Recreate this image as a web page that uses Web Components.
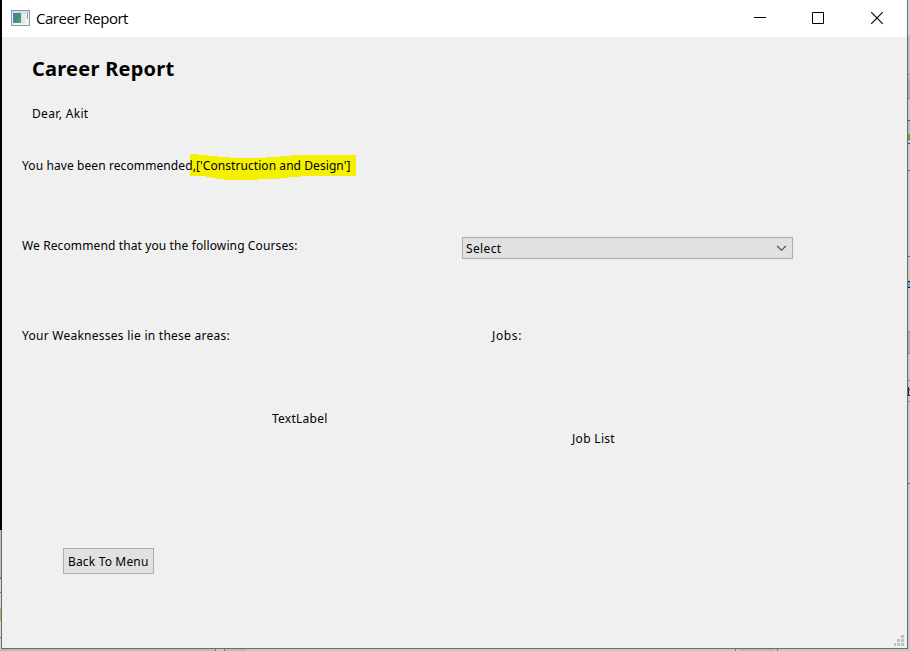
<!DOCTYPE html>
<html lang="en">
<head>
<meta charset="utf-8">
<title>Career Report</title>
<style>
html,body{margin:0;height:100%;overflow:hidden}
body{font:12px/16px "Noto Sans","Open Sans",sans-serif;color:#000}
</style>
</head>
<body>
<desktop-backdrop>
<app-window>
  <title-bar slot="bar"><fit-text width="92" style="font:15px/20px 'Open Sans','Noto Sans',sans-serif">Career Report</fit-text></title-bar>
  <form-row style="--h:63px;--x:30px;--y:20px"><fit-text width="142.5" style="font:bold 20px/24px 'Noto Sans',sans-serif">Career Report</fit-text></form-row>
  <form-row style="--h:54px;--x:30px;--y:6px"><fit-text width="56.5">Dear, Akit</fit-text></form-row>
  <form-row style="--h:76px;--x:20px;--y:4px"><fit-text width="174">You have been recommended,</fit-text><marker-text><fit-text width="154.5">['Construction and Design']</fit-text></marker-text></form-row>
  <form-row style="--h:90px;--x:20px;--y:8px"><fit-text width="275.5">We Recommend that you the following Courses:</fit-text><combo-box style="margin-left:164.5px"><fit-text width="35.5">Select</fit-text></combo-box></form-row>
  <form-row style="--h:84px;--x:20px;--y:8px"><fit-text width="208">Your Weaknesses lie in these areas:</fit-text><fit-text width="30" style="margin-left:262px">Jobs:</fit-text></form-row>
  <form-row style="--h:20px;--x:270px;--y:7px"><fit-text width="55.5">TextLabel</fit-text></form-row>
  <form-row style="--h:124px;--x:570px;--y:7px"><fit-text width="43">Job List</fit-text></form-row>
  <form-row style="--h:60px;--x:61px;--y:0px"><push-button><fit-text width="80.5">Back To Menu</fit-text></push-button></form-row>
  <size-grip slot="grip"></size-grip>
</app-window>
</desktop-backdrop>
<script>
function define(name, markup, connected) {
  customElements.define(name, class extends HTMLElement {
    constructor() { super(); this.attachShadow({mode: 'open'}).innerHTML = markup; }
    connectedCallback() { if (connected) connected(this); }
  });
}

// A one-line label whose tracking is adjusted to its stated width.
define('fit-text', `<style>
:host{display:block;flex:none;white-space:nowrap;position:relative;z-index:1}
span{display:inline-block}
</style><span><slot></slot></span>`, el => {
  const span = el.shadowRoot.querySelector('span');
  const target = +el.getAttribute('width');
  const n = el.textContent.length;
  span.style.letterSpacing = (target - span.getBoundingClientRect().width) / n + 'px';
  el.style.width = target + 'px';
});

define('form-row', `<style>
:host{display:flex;box-sizing:border-box;flex:none;align-items:flex-start;height:var(--h);padding:var(--y) 0 0 var(--x)}
</style><slot></slot>`);

define('marker-text', `<style>
:host{display:block;position:relative}
svg{position:absolute;left:-6px;top:-4px;width:168px;height:28px}
</style>
<svg viewBox="0 0 168 28" shape-rendering="crispEdges"><path fill="#f4f000" d="M0 0h8v1h11v1h9v1h12v1h36v-1h14v-1h12v-1h64v21h-55v1h-13v1h-9v1H68v1H35v-1h-8v-1H21v-1h-5v-1H0z"/></svg>
<slot></slot>`);

define('combo-box', `<style>
:host{display:flex;box-sizing:border-box;width:331px;height:22px;margin-top:-1px;border:1px solid #adadad;background:#e1e1e1;padding:3px 5px 0 3px;justify-content:space-between}
svg{width:11px;height:7px;margin-top:4px}
</style><slot></slot><svg viewBox="0 0 11 7"><path d="M1.2 1 5.5 5.3 9.8 1" fill="none" stroke="#444" stroke-width="1.1"/></svg>`);

define('push-button', `<style>
:host{display:flex;box-sizing:border-box;width:91px;height:26px;border:1px solid #adadad;background:#e1e1e1;padding:5px 0 0 4px}
</style><slot></slot>`);

define('title-bar', `<style>
:host{display:flex;align-items:flex-start;height:37px;background:#fff}
.app{width:19px;height:16px;margin:10px 6px 0 9px}
slot{display:block;padding-top:8px}
.buttons{margin:9px 21px 0 auto;display:flex;gap:40px}
.buttons svg{width:18px;height:18px}
.buttons svg:last-child{margin-left:1px}
</style>
<svg class="app" viewBox="0 0 19 16" shape-rendering="crispEdges">
<defs><linearGradient id="g" x2="1" y2="1"><stop stop-color="#477db0"/><stop offset=".55" stop-color="#438e82"/><stop offset="1" stop-color="#5daa6a"/></linearGradient><linearGradient id="s" x2="0" y2="1"><stop stop-color="#5a99b2"/><stop offset="1" stop-color="#70b477"/></linearGradient></defs>
<path fill="#9298a0" d="M0 0h19v16H0z"/><path fill="#f4f5f6" d="M1 1h17v14H1z"/><path fill="#d9dde2" d="M1 1h17v2H1zM10 3h5v10h-5z"/><path fill="url(#g)" d="M2 3h8v10H2z"/><path fill="#e8ebed" d="M11 4h4v8h-4z"/><path fill="url(#s)" d="M16 3h1v6h-1z"/></svg>
<slot></slot>
<div class="buttons">
<svg viewBox="0 0 18 18" shape-rendering="crispEdges"><path d="M3 8h12v1H3z"/></svg>
<svg viewBox="0 0 18 18"><path d="M3.5 3.5h11v11h-11z" fill="none" stroke="#000"/></svg>
<svg viewBox="0 0 18 18"><path d="m3.2 3.2 11.6 11.6m0-11.6L3.2 14.8" fill="none" stroke="#000" stroke-width="1.1"/></svg>
</div>`);

define('size-grip', `<style>
:host{display:block;position:absolute;right:3px;bottom:2px;width:10px;height:11px}
svg{display:block}
</style><svg width="10" height="11" shape-rendering="crispEdges"><path fill="#bfbfbf" d="M7 0h3v3H7zM3 4h3v3H3zM7 4h3v3H7zM0 8h2v3H0zM3 8h3v3H3zM7 8h3v3H7z"/></svg>`);

define('app-window', `<style>
:host{display:flex;flex-direction:column;box-sizing:border-box;position:relative;width:907px;height:649px;margin-left:1px;border:solid #6c6c6c;border-width:0 1px 1px;background:#f0f0f0}
:host::before{content:"";position:absolute;left:-1px;top:0;width:1px;height:530px;background:#000}
</style><slot name="bar"></slot><slot></slot><slot name="grip"></slot>`);

// The slivers of other windows that show around the main window's edges.
define('desktop-backdrop', `<style>
:host{display:block;position:relative;width:910px;height:651px;background:#c9c7c7;overflow:hidden}
.back{position:absolute;left:0;top:0}
</style>
<svg class="back" width="910" height="651" shape-rendering="crispEdges">
<path fill="#000" d="M0 0h1v530H0z"/>
<path fill="#bdbdbd" d="M0 530h1v47H0z"/><path fill="#d7d7d7" d="M0 579h1v70H0z"/>
<path fill="#777" d="M0 577h1v2H0zM0 592h1v1H0zM0 637h1v1H0z"/><path fill="#b7b35e" d="M0 608h1v13H0z"/>
<path fill="#d4d4d4" d="M908 0h2v34h-2z"/><path fill="#bdbdbd" d="M908 36h2v38h-2z"/><path fill="#aaa" d="M908 77h2v21h-2zM908 331h2v23h-2z"/>
<path fill="#8d8d8d" d="M908 74h2v1h-2zM908 98h2v1h-2zM908 331h2v1h-2zM908 353h2v1h-2zM908 380h2v1h-2zM908 401h2v1h-2z"/>
<path fill="#165c95" d="M908 120h2v1h-2zM908 143h2v1h-2z"/><path fill="#a8bdcf" d="M908 121h2v13h-2z"/><path fill="#709b3b" d="M908 134h2v6h-2z"/>
<path fill="#666" d="M908 170h2v1h-2zM908 256h2v1h-2zM908 483h2v1h-2z"/>
<path fill="#111" d="M908 281h2v7h-2z"/><path fill="#58aee0" d="M908 282h2v5h-2z"/>
<path fill="#241a4d" d="M908 387h1v9h-1zM909 389h1v1h-1zM909 395h1v1h-1z"/>
<path fill="#b9b9b9" d="M0 649h215v2H0zM225 649h21v2h-21zM740 649h34v2h-34z"/>
<path fill="#777" d="M215 649h1v2h-1zM224 649h1v2h-1zM735 649h1v2h-1zM777 649h1v2h-1z"/>
</svg><slot></slot>`);
</script>
</body>
</html>
